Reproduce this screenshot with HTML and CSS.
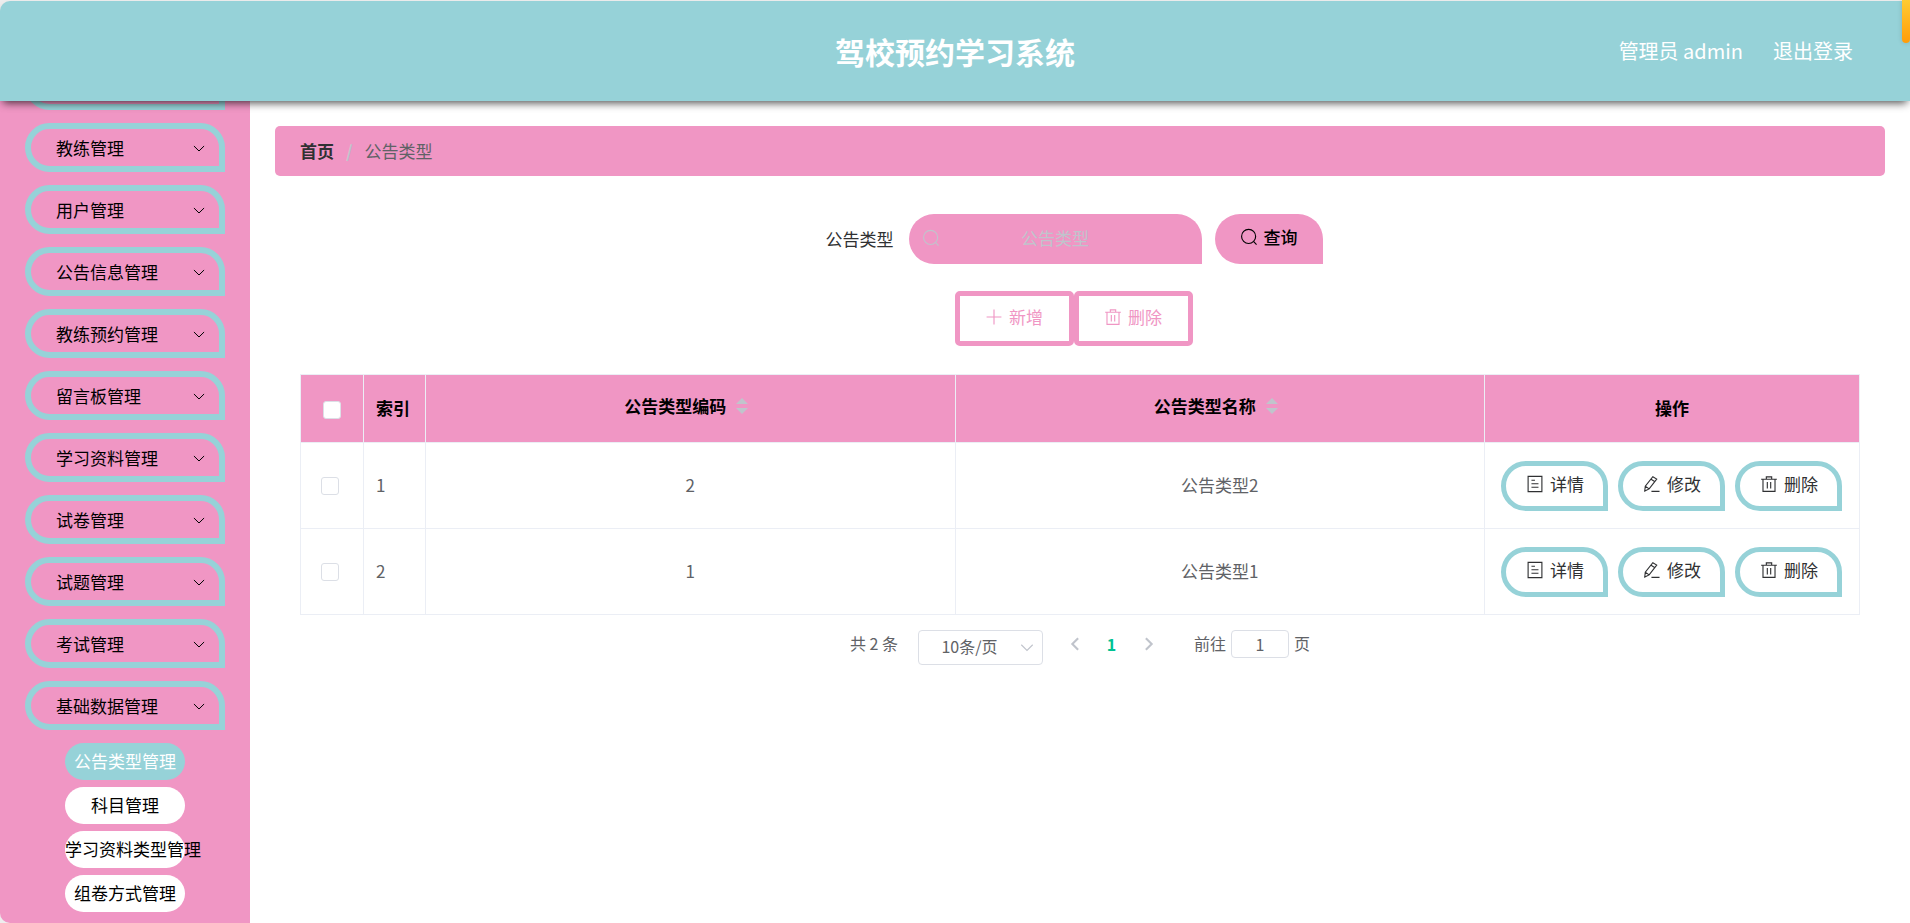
FILE: index.html
```html
<!DOCTYPE html>
<html lang="zh-CN">
<head>
    <meta charset="UTF-8">
    <meta name="viewport" content="width=device-width, initial-scale=1.0">
    <title>驾校预约学习系统</title>
    <link rel="stylesheet" href="styles.css">
</head>
<body>
    <!-- shared icons -->
    <svg class="sprite" aria-hidden="true">
        <symbol id="icon-down" viewBox="0 0 1024 1024"><path d="M187 384l325 320 325-320"/></symbol>
        <symbol id="icon-left" viewBox="0 0 1024 1024"><path d="M690 180L360 512l330 332"/></symbol>
        <symbol id="icon-right" viewBox="0 0 1024 1024"><path d="M334 180l330 332-330 332"/></symbol>
        <symbol id="icon-search" viewBox="0 0 1024 1024"><circle cx="490" cy="480" r="400"/><path d="M780 770l160 170"/></symbol>
        <symbol id="icon-plus" viewBox="0 0 1024 1024"><path d="M512 90v844M90 512h844"/></symbol>
        <symbol id="icon-delete" viewBox="0 0 1024 1024"><path d="M64 240h896M170 240v690h684V240M360 240V110h304v130M416 400v370M608 400v370"/></symbol>
        <symbol id="icon-detail" viewBox="0 0 1024 1024"><path d="M120 80h784v864H120zM310 300h200M310 500h400M310 700h400"/></symbol>
        <symbol id="icon-edit" viewBox="0 0 1024 1024"><path d="M560 100l220 130-430 560-250 120 30-270zM460 240l220 140M130 640l220 150M480 930h460"/></symbol>
    </svg>

    <div class="app">
        <header class="header">
            <h1>驾校预约学习系统</h1>
            <div class="user">
                <span>管理员 admin</span>
                <a href="#">退出登录</a>
            </div>
        </header>
        <div class="float-tab"></div>

        <div class="body">
            <nav class="sidebar">
                <ul class="menu">
                    <li class="menu-item"></li>
                    <li><button class="menu-item">教练管理<svg class="icon"><use href="#icon-down"/></svg></button></li>
                    <li><button class="menu-item">用户管理<svg class="icon"><use href="#icon-down"/></svg></button></li>
                    <li><button class="menu-item">公告信息管理<svg class="icon"><use href="#icon-down"/></svg></button></li>
                    <li><button class="menu-item">教练预约管理<svg class="icon"><use href="#icon-down"/></svg></button></li>
                    <li><button class="menu-item">留言板管理<svg class="icon"><use href="#icon-down"/></svg></button></li>
                    <li><button class="menu-item">学习资料管理<svg class="icon"><use href="#icon-down"/></svg></button></li>
                    <li><button class="menu-item">试卷管理<svg class="icon"><use href="#icon-down"/></svg></button></li>
                    <li><button class="menu-item">试题管理<svg class="icon"><use href="#icon-down"/></svg></button></li>
                    <li><button class="menu-item">考试管理<svg class="icon"><use href="#icon-down"/></svg></button></li>
                    <li><button class="menu-item">基础数据管理<svg class="icon"><use href="#icon-down"/></svg></button></li>
                </ul>
                <ul class="submenu">
                    <li><a class="active" href="#">公告类型管理</a></li>
                    <li><a href="#">科目管理</a></li>
                    <li><a href="#">学习资料类型管理</a></li>
                    <li><a href="#">组卷方式管理</a></li>
                </ul>
            </nav>

            <main class="main">
                <div class="breadcrumb">
                    <a href="#">首页</a>
                    <span class="separator">/</span>
                    <span>公告类型</span>
                </div>

                <div class="content">
                    <form class="search">
                        <label for="typeName">公告类型</label>
                        <div class="search-box">
                            <svg class="icon"><use href="#icon-search"/></svg>
                            <input type="text" id="typeName" placeholder="公告类型">
                        </div>
                        <button type="button" class="query"><svg class="icon"><use href="#icon-search"/></svg>查询</button>
                    </form>

                    <div class="actions">
                        <button class="outline"><svg class="icon"><use href="#icon-plus"/></svg>新增</button>
                        <button class="outline"><svg class="icon"><use href="#icon-delete"/></svg>删除</button>
                    </div>

                    <table class="table">
                        <colgroup>
                            <col class="col-check">
                            <col class="col-index">
                            <col>
                            <col>
                            <col class="col-ops">
                        </colgroup>
                        <thead>
                            <tr>
                                <th><input type="checkbox" aria-label="全选"></th>
                                <th class="left">索引</th>
                                <th><span class="sortable">公告类型编码<span class="caret"></span></span></th>
                                <th><span class="sortable">公告类型名称<span class="caret"></span></span></th>
                                <th>操作</th>
                            </tr>
                        </thead>
                        <tbody>
                            <tr>
                                <td class="check"><input type="checkbox" aria-label="选择 1"></td>
                                <td class="left">1</td>
                                <td>2</td>
                                <td>公告类型2</td>
                                <td>
                                    <div class="ops">
                                        <button><svg class="icon"><use href="#icon-detail"/></svg>详情</button>
                                        <button><svg class="icon"><use href="#icon-edit"/></svg>修改</button>
                                        <button><svg class="icon"><use href="#icon-delete"/></svg>删除</button>
                                    </div>
                                </td>
                            </tr>
                            <tr>
                                <td class="check"><input type="checkbox" aria-label="选择 2"></td>
                                <td class="left">2</td>
                                <td>1</td>
                                <td>公告类型1</td>
                                <td>
                                    <div class="ops">
                                        <button><svg class="icon"><use href="#icon-detail"/></svg>详情</button>
                                        <button><svg class="icon"><use href="#icon-edit"/></svg>修改</button>
                                        <button><svg class="icon"><use href="#icon-delete"/></svg>删除</button>
                                    </div>
                                </td>
                            </tr>
                        </tbody>
                    </table>

                    <div class="pagination">
                        <span>共 2 条</span>
                        <div class="page-size">
                            <select aria-label="每页条数">
                                <option>10条/页</option>
                                <option>20条/页</option>
                            </select>
                            <svg class="icon"><use href="#icon-down"/></svg>
                        </div>
                        <div class="pager">
                            <button aria-label="上一页"><svg class="icon"><use href="#icon-left"/></svg></button>
                            <button class="current">1</button>
                            <button aria-label="下一页"><svg class="icon"><use href="#icon-right"/></svg></button>
                        </div>
                        <div class="jump">
                            <label for="page">前往</label>
                            <input type="text" id="page" value="1">
                            <span>页</span>
                        </div>
                    </div>
                </div>
            </main>
        </div>
    </div>
</body>
</html>
```
FILE: styles.css
```css
* {
    box-sizing: border-box;
}
body {
    margin: 0;
    background-color: #eee;
    color: #606266;
    font-family: "Noto Sans CJK SC", sans-serif;
    font-size: 17px;
    line-height: 24px;
}
button, input, select {
    font: inherit;
    color: inherit;
}
button {
    cursor: pointer;
}
a {
    color: inherit;
    text-decoration: none;
}
ul {
    list-style: none;
    margin: 0;
    padding: 0;
}
.sprite {
    display: none;
}
.icon {
    width: 18px;
    height: 18px;
    flex: none;
    fill: none;
    stroke: currentColor;
    stroke-width: 64;
}
.app {
    display: flex;
    flex-direction: column;
    height: 100vh;
    padding-top: 1px;
}

/* header */
.header {
    position: relative;
    z-index: 1;
    flex: none;
    display: grid;
    grid-template-columns: 1fr auto 1fr;
    align-items: center;
    height: 100px;
    padding: 0 57px;
    border-radius: 10px 0 0 0;
    background-color: #96d2d8;
    box-shadow: 0 5px 8px -3px rgba(0, 0, 0, 0.7);
    color: #fff;
}
.header h1 {
    grid-column: 2;
    margin: 0;
    font-size: 30px;
    line-height: 40px;
}
.user {
    display: flex;
    justify-content: flex-end;
    gap: 30px;
    font-size: 20px;
}
.float-tab {
    position: absolute;
    z-index: 2;
    top: 0;
    right: 0;
    width: 8px;
    height: 43px;
    border-radius: 0 0 5px 5px;
    background: linear-gradient(#ffcb33, #ff9c0a);
    box-shadow: 0 0 5px rgba(0, 0, 0, 0.15);
}
.body {
    flex: 1;
    display: flex;
    min-height: 0;
}

/* sidebar, scrolled to its end */
.sidebar {
    flex: none;
    display: flex;
    flex-direction: column;
    justify-content: flex-end;
    width: 250px;
    padding: 0 25px 11px;
    overflow: hidden;
    border-radius: 0 0 0 10px;
    background-color: #f096c4;
    color: #000;
}
.menu-item {
    display: flex;
    align-items: center;
    justify-content: space-between;
    width: 100%;
    height: 49px;
    margin-bottom: 13px;
    padding: 0 12px 0 25px;
    border: 6px solid #96d2d8;
    border-radius: 25px 25px 0 25px;
    background: none;
}
.menu-item .icon {
    width: 16px;
    height: 16px;
}
.submenu {
    display: flex;
    flex-direction: column;
    gap: 7px;
    padding: 0 40px;
}
.submenu a {
    display: block;
    height: 37px;
    border-radius: 19px;
    background-color: #fff;
    line-height: 36px;
    text-align: center;
    white-space: nowrap;
}
.submenu .active {
    background-color: #96d2d8;
    color: #fff;
}

/* main */
.main {
    flex: 1;
    min-width: 0;
    padding: 25px;
    background-color: #fff;
}
.breadcrumb {
    display: flex;
    align-items: center;
    height: 50px;
    padding: 0 25px;
    border-radius: 5px;
    background-color: #f096c4;
}
.breadcrumb a {
    color: #303133;
    font-weight: bold;
}
.separator {
    margin: 0 12px;
    color: #c0c4cc;
    font-weight: bold;
}
.content {
    padding: 38px 25px;
}
.search, .actions {
    display: flex;
    justify-content: center;
    padding-right: 12px;
}
.search {
    align-items: center;
    color: #303133;
}
.search-box {
    position: relative;
    margin: 0 13px 0 15px;
}
.search-box .icon {
    position: absolute;
    top: 15px;
    left: 13px;
    color: #c0c4cc;
}
.search-box input {
    display: block;
    width: 293px;
    height: 50px;
    padding: 0 38px 3px;
    border: none;
    border-radius: 25px 25px 0 25px;
    background-color: #f096c4;
    text-align: center;
}
.search-box input::placeholder {
    color: #c0c4cc;
}
.query {
    display: flex;
    align-items: center;
    gap: 6px;
    height: 50px;
    padding: 0 25px 4px;
    border: none;
    border-radius: 25px 25px 0 25px;
    background-color: #f096c4;
    color: #000;
    font-weight: 500;
}
.actions {
    margin: 27px 0 28px;
}
.outline {
    display: flex;
    align-items: center;
    gap: 6px;
    height: 55px;
    padding: 0 26px 4px 25px;
    border: 5px solid #f096c4;
    border-radius: 5px;
    background-color: #fff;
    color: #f096c4;
}

/* table */
.table {
    width: 100%;
    table-layout: fixed;
    border-collapse: collapse;
    text-align: center;
}
.col-check {
    width: 63px;
}
.col-index {
    width: 62px;
}
.col-ops {
    width: 375px;
}
.table th, .table td {
    padding: 0 0 2px;
    border: 1px solid #ebeef5;
}
.table th {
    height: 68px;
    background-color: #f096c4;
    color: #000;
}
.table td {
    height: 86px;
}
.table .left {
    padding-left: 12px;
    text-align: left;
}
.table .check {
    padding: 0 5px 0 0;
}
.table input {
    appearance: none;
    display: block;
    width: 18px;
    height: 18px;
    margin: 0 auto;
    border: 1px solid #dcdfe6;
    border-radius: 3px;
    background-color: #fff;
}
.table th input {
    margin-top: 4px;
}
.sortable {
    display: inline-flex;
    align-items: center;
    gap: 10px;
    padding: 0 8px 3px 0;
}
.caret::before, .caret::after {
    content: "";
    display: block;
    border: 6px solid transparent;
}
.caret::before {
    margin-bottom: 4px;
    border-top: none;
    border-bottom-color: #c0c4cc;
}
.caret::after {
    border-bottom: none;
    border-top-color: #c0c4cc;
}
.ops {
    display: flex;
    justify-content: center;
    gap: 10px;
    padding: 2px 1px 0 0;
}
.ops button {
    display: flex;
    align-items: center;
    gap: 6px;
    height: 50px;
    padding: 0 19px 4px 20px;
    border: 5px solid #96d2d8;
    border-radius: 25px 25px 0 25px;
    background-color: #fff;
    color: #303133;
}

/* pagination */
.pagination {
    display: flex;
    justify-content: center;
    margin-top: 15px;
    font-size: 16px;
    line-height: 26px;
}
.page-size {
    position: relative;
    margin: 0 13px 0 20px;
}
.page-size select {
    appearance: none;
    display: block;
    width: 125px;
    height: 35px;
    padding: 0 22px 3px 0;
    border: 1px solid #dcdfe6;
    border-radius: 4px;
    background-color: #fff;
    text-align: center;
    text-align-last: center;
}
.page-size .icon {
    position: absolute;
    top: 8px;
    right: 7px;
    color: #c0c4cc;
    pointer-events: none;
}
.pager {
    display: flex;
}
.pager button {
    display: flex;
    align-items: center;
    justify-content: center;
    width: 37px;
    height: 27px;
    padding: 0;
    border: none;
    background: none;
    color: #c0c4cc;
}
.pager .icon {
    stroke-width: 120;
}
.pager .current {
    color: #00c292;
    font-weight: bold;
}
.jump {
    display: flex;
    gap: 5px;
    margin-left: 27px;
}
.jump input {
    width: 58px;
    height: 28px;
    padding: 0;
    border: 1px solid #dcdfe6;
    border-radius: 4px;
    background-color: #fff;
    text-align: center;
}
```
